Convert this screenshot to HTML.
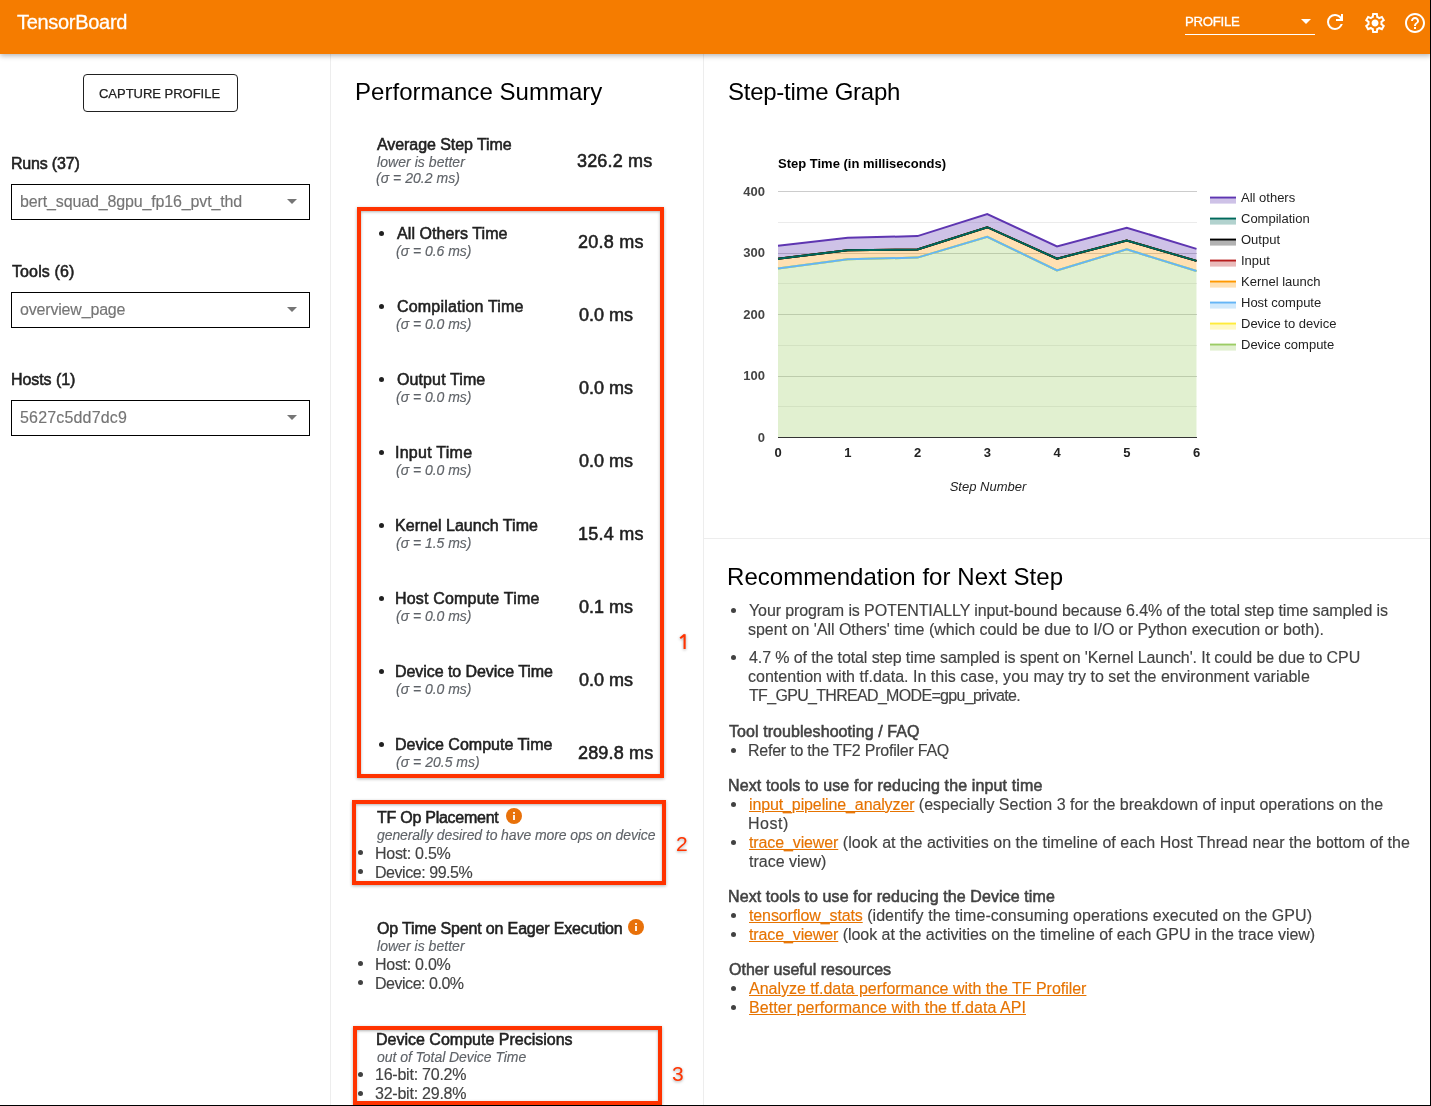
<!DOCTYPE html>
<html><head><meta charset="utf-8"><title>TensorBoard</title>
<style>
html,body{margin:0;padding:0;width:1431px;height:1106px;overflow:hidden;background:#fff;font-family:"Liberation Sans", sans-serif;}
.t{position:absolute;white-space:nowrap;line-height:1;will-change:transform;}
.r{position:absolute;box-sizing:content-box;}
</style></head><body>
<div class="r" style="left:0px;top:0px;width:1431px;height:54px;background:#f57c00;box-shadow:0 2px 5px rgba(0,0,0,.28);z-index:2"></div>
<div class="t" id="e7ac23f2f" style="left:16.90px;top:12.27px;font-size:20px;color:#fff;letter-spacing:-0.3px;z-index:3;-webkit-text-stroke:0.3px currentColor;">TensorBoard</div>
<div class="t" id="e34d6bd6a" style="left:1184.91px;top:14.83px;font-size:13.2px;color:#fff;letter-spacing:-0.28px;z-index:3;-webkit-text-stroke:0.3px currentColor;">PROFILE</div>
<div class="r" style="left:1185px;top:34px;width:130px;height:1px;background:#fff;z-index:3"></div>
<svg class="r" style="left:1301px;top:19px;z-index:3" width="10" height="5"><path d="M0 0H10L5 5Z" fill="#fff"/></svg>
<svg class="r" style="left:1323px;top:10px;z-index:3" width="24" height="24" viewBox="0 -960 960 960"><path fill="#fff" d="M480-160q-134 0-227-93t-93-227q0-134 93-227t227-93q69 0 132 28.5T720-690v-110h80v280H520v-80h168q-32-56-87.5-88T480-720q-100 0-170 70t-70 170q0 100 70 170t170 70q77 0 139-44t87-116h84q-28 106-114 173t-196 67Z"/></svg>
<svg class="r" style="left:1363px;top:11px;z-index:3" width="24" height="24" viewBox="0 -960 960 960"><path fill="#fff" d="M370-80l-16-128q-13-5-24.5-12T307-235l-119 50L78-375l103-78q-1-7-1-13.5v-27q0-6.5 1-13.5L78-585l110-190 119 50q11-8 23-15t24-12l16-128h220l16 128q13 5 24.5 12t22.5 15l119-50 110 190-103 78q1 7 1 13.5v27q0 6.5-2 13.5l103 78-110 190-118-50q-11 8-23 15t-24 12L590-80H370Zm70-80h79l14-106q31-8 57.5-23.5T639-327l99 41 39-68-86-65q5-14 7-29.5t2-31.5q0-16-2-31.5t-7-29.5l86-65-39-68-99 42q-22-23-48.5-38.5T533-694l-13-106h-79l-14 106q-31 8-57.5 23.5T321-633l-99-41-39 68 86 64q-5 15-7 30t-2 32q0 16 2 31t7 30l-86 65 39 68 99-42q22 23 48.5 38.5T427-266l13 106Zm42-180q58 0 99-41t41-99q0-58-41-99t-99-41q-59 0-99.5 41T342-480q0 58 40.5 99t99.5 41Zm-2-140Z"/></svg>
<svg class="r" style="left:1403px;top:11px;z-index:3" width="24" height="24" viewBox="0 0 24 24"><path fill="#fff" d="M11 18h2v-2h-2v2zm1-16C6.48 2 2 6.48 2 12s4.48 10 10 10 10-4.48 10-10S17.52 2 12 2zm0 18c-4.41 0-8-3.59-8-8s3.59-8 8-8 8 3.59 8 8-3.59 8-8 8zm0-14c-2.21 0-4 1.79-4 4h2c0-1.1.9-2 2-2s2 .9 2 2c0 2-3 1.75-3 5h2c0-2.25 3-2.5 3-5 0-2.21-1.79-4-4-4z"/></svg>
<div class="r" style="left:330px;top:54px;width:1px;height:1052px;background:#ededed"></div>
<div class="r" style="left:703px;top:54px;width:1px;height:1052px;background:#ededed"></div>
<div class="r" style="left:704px;top:538px;width:726px;height:1px;background:#ededed"></div>
<div class="r" style="left:1430px;top:0px;width:1px;height:1106px;background:#000;z-index:5"></div>
<div class="r" style="left:0px;top:1105px;width:1431px;height:1px;background:#000;z-index:5"></div>
<div class="r" style="left:83px;top:74px;width:153px;height:36px;border:1px solid #212121;border-radius:4px"></div>
<div class="t" id="e3f71703e" style="left:99.28px;top:86.70px;font-size:13px;color:#212121;letter-spacing:-0.022px;-webkit-text-stroke:0.25px currentColor;">CAPTURE PROFILE</div>
<div class="t" id="e69a73742" style="left:10.60px;top:156.46px;font-size:16px;color:#212121;letter-spacing:-0.188px;-webkit-text-stroke:0.55px currentColor;">Runs (37)</div>
<div class="r" style="left:11px;top:184px;width:297px;height:34px;border:1px solid #000"></div>
<div class="t" id="efdc58bc0" style="left:19.78px;top:194.46px;font-size:16px;color:#757575;letter-spacing:-0.138px;-webkit-text-stroke:0.15px currentColor;">bert_squad_8gpu_fp16_pvt_thd</div>
<svg class="r" style="left:287px;top:199px" width="10" height="5"><path d="M0 0H10L5 5Z" fill="#757575"/></svg>
<div class="t" id="e2957bea9" style="left:12.04px;top:264.46px;font-size:16px;color:#212121;letter-spacing:0.111px;-webkit-text-stroke:0.55px currentColor;">Tools (6)</div>
<div class="r" style="left:11px;top:292px;width:297px;height:34px;border:1px solid #000"></div>
<div class="t" id="ed848ae1f" style="left:19.78px;top:302.46px;font-size:16px;color:#757575;letter-spacing:-0.178px;-webkit-text-stroke:0.15px currentColor;">overview_page</div>
<svg class="r" style="left:287px;top:307px" width="10" height="5"><path d="M0 0H10L5 5Z" fill="#757575"/></svg>
<div class="t" id="e276de8dc" style="left:11.14px;top:372.46px;font-size:16px;color:#212121;letter-spacing:-0.075px;-webkit-text-stroke:0.55px currentColor;">Hosts (1)</div>
<div class="r" style="left:11px;top:400px;width:297px;height:34px;border:1px solid #000"></div>
<div class="t" id="ea2d31f17" style="left:19.78px;top:410.46px;font-size:16px;color:#757575;letter-spacing:0.174px;-webkit-text-stroke:0.15px currentColor;">5627c5dd7dc9</div>
<svg class="r" style="left:287px;top:415px" width="10" height="5"><path d="M0 0H10L5 5Z" fill="#757575"/></svg>
<div class="t" id="ec11216be" style="left:354.69px;top:80.28px;font-size:24px;color:#000;letter-spacing:0.035px;">Performance Summary</div>
<div class="t" id="e68c13739" style="left:376.72px;top:136.66px;font-size:16px;color:#212121;letter-spacing:-0.069px;-webkit-text-stroke:0.55px currentColor;">Average Step Time</div>
<div class="t" id="ef801746d" style="left:376.50px;top:154.95px;font-size:14px;color:#5f6368;font-style:italic;letter-spacing:0.051px;-webkit-text-stroke:0.15px currentColor;">lower is better</div>
<div class="t" id="e3f0840fb" style="left:375.60px;top:170.65px;font-size:14px;color:#5f6368;font-style:italic;letter-spacing:0.026px;-webkit-text-stroke:0.15px currentColor;">(&sigma; = 20.2 ms)</div>
<div class="t" id="effa8100f" style="left:577.05px;top:151.96px;font-size:18px;color:#212121;letter-spacing:0.17px;-webkit-text-stroke:0.55px currentColor;">326.2 ms</div>
<div class="r" style="left:379px;top:231px;width:5px;height:5px;background:#212121;border-radius:50%"></div>
<div class="t" id="e4fb858f4" style="left:396.85px;top:225.86px;font-size:16px;color:#212121;letter-spacing:0.079px;-webkit-text-stroke:0.55px currentColor;">All Others Time</div>
<div class="t" id="ebd3819c3" style="left:395.96px;top:244.15px;font-size:14px;color:#5f6368;font-style:italic;letter-spacing:-0.025px;-webkit-text-stroke:0.15px currentColor;">(&sigma; = 0.6 ms)</div>
<div class="t" id="e31d540ce" style="left:577.68px;top:232.96px;font-size:18px;color:#212121;letter-spacing:0.245px;-webkit-text-stroke:0.55px currentColor;">20.8 ms</div>
<div class="r" style="left:379px;top:304px;width:5px;height:5px;background:#212121;border-radius:50%"></div>
<div class="t" id="e8757c39d" style="left:396.85px;top:298.86px;font-size:16px;color:#212121;letter-spacing:0.192px;-webkit-text-stroke:0.55px currentColor;">Compilation Time</div>
<div class="t" id="e2998488b" style="left:395.96px;top:317.15px;font-size:14px;color:#5f6368;font-style:italic;letter-spacing:-0.025px;-webkit-text-stroke:0.15px currentColor;">(&sigma; = 0.0 ms)</div>
<div class="t" id="ed42637f7" style="left:578.58px;top:305.96px;font-size:18px;color:#212121;letter-spacing:-0.004px;-webkit-text-stroke:0.55px currentColor;">0.0 ms</div>
<div class="r" style="left:379px;top:377px;width:5px;height:5px;background:#212121;border-radius:50%"></div>
<div class="t" id="e3b615713" style="left:396.85px;top:371.86px;font-size:16px;color:#212121;letter-spacing:0.108px;-webkit-text-stroke:0.55px currentColor;">Output Time</div>
<div class="t" id="e2c4313df" style="left:395.96px;top:390.15px;font-size:14px;color:#5f6368;font-style:italic;letter-spacing:-0.025px;-webkit-text-stroke:0.15px currentColor;">(&sigma; = 0.0 ms)</div>
<div class="t" id="e11951815" style="left:578.58px;top:378.96px;font-size:18px;color:#212121;letter-spacing:-0.004px;-webkit-text-stroke:0.55px currentColor;">0.0 ms</div>
<div class="r" style="left:379px;top:450px;width:5px;height:5px;background:#212121;border-radius:50%"></div>
<div class="t" id="ec2a1ae87" style="left:395.05px;top:444.86px;font-size:16px;color:#212121;letter-spacing:0.26px;-webkit-text-stroke:0.55px currentColor;">Input Time</div>
<div class="t" id="e92be7d29" style="left:395.96px;top:463.15px;font-size:14px;color:#5f6368;font-style:italic;letter-spacing:-0.025px;-webkit-text-stroke:0.15px currentColor;">(&sigma; = 0.0 ms)</div>
<div class="t" id="eb084929b" style="left:578.58px;top:451.96px;font-size:18px;color:#212121;letter-spacing:-0.004px;-webkit-text-stroke:0.55px currentColor;">0.0 ms</div>
<div class="r" style="left:379px;top:523px;width:5px;height:5px;background:#212121;border-radius:50%"></div>
<div class="t" id="e550816f2" style="left:395.05px;top:517.86px;font-size:16px;color:#212121;letter-spacing:0.036px;-webkit-text-stroke:0.55px currentColor;">Kernel Launch Time</div>
<div class="t" id="ec676dd66" style="left:395.96px;top:536.15px;font-size:14px;color:#5f6368;font-style:italic;letter-spacing:-0.025px;-webkit-text-stroke:0.15px currentColor;">(&sigma; = 1.5 ms)</div>
<div class="t" id="eeed91f0b" style="left:577.68px;top:524.96px;font-size:18px;color:#212121;letter-spacing:0.245px;-webkit-text-stroke:0.55px currentColor;">15.4 ms</div>
<div class="r" style="left:379px;top:596px;width:5px;height:5px;background:#212121;border-radius:50%"></div>
<div class="t" id="e9079b867" style="left:395.05px;top:590.86px;font-size:16px;color:#212121;letter-spacing:0.182px;-webkit-text-stroke:0.55px currentColor;">Host Compute Time</div>
<div class="t" id="ecef85109" style="left:395.96px;top:609.15px;font-size:14px;color:#5f6368;font-style:italic;letter-spacing:-0.025px;-webkit-text-stroke:0.15px currentColor;">(&sigma; = 0.0 ms)</div>
<div class="t" id="e1f83909a" style="left:578.58px;top:597.96px;font-size:18px;color:#212121;letter-spacing:-0.004px;-webkit-text-stroke:0.55px currentColor;">0.1 ms</div>
<div class="r" style="left:379px;top:669px;width:5px;height:5px;background:#212121;border-radius:50%"></div>
<div class="t" id="e9eccda0c" style="left:395.05px;top:663.86px;font-size:16px;color:#212121;letter-spacing:-0.063px;-webkit-text-stroke:0.55px currentColor;">Device to Device Time</div>
<div class="t" id="eabe1e7b6" style="left:395.96px;top:682.15px;font-size:14px;color:#5f6368;font-style:italic;letter-spacing:-0.025px;-webkit-text-stroke:0.15px currentColor;">(&sigma; = 0.0 ms)</div>
<div class="t" id="e15b24e4e" style="left:578.58px;top:670.96px;font-size:18px;color:#212121;letter-spacing:-0.004px;-webkit-text-stroke:0.55px currentColor;">0.0 ms</div>
<div class="r" style="left:379px;top:742px;width:5px;height:5px;background:#212121;border-radius:50%"></div>
<div class="t" id="e86278ba4" style="left:395.05px;top:736.86px;font-size:16px;color:#212121;-webkit-text-stroke:0.55px currentColor;">Device Compute Time</div>
<div class="t" id="e9be4e9dd" style="left:395.96px;top:755.15px;font-size:14px;color:#5f6368;font-style:italic;letter-spacing:0.015px;-webkit-text-stroke:0.15px currentColor;">(&sigma; = 20.5 ms)</div>
<div class="t" id="e6b722b1d" style="left:577.68px;top:743.96px;font-size:18px;color:#212121;letter-spacing:0.169px;-webkit-text-stroke:0.55px currentColor;">289.8 ms</div>
<div class="t" id="ee5c8a053" style="left:376.50px;top:810.26px;font-size:16px;color:#212121;letter-spacing:-0.256px;-webkit-text-stroke:0.55px currentColor;">TF Op Placement</div>
<svg class="r" style="left:505.5px;top:808px" width="16" height="16" viewBox="0 0 16 16"><circle cx="8" cy="8" r="8" fill="#e8710a"/><rect x="7.1" y="7" width="1.8" height="5" fill="#fff"/><rect x="7.1" y="4" width="1.8" height="1.8" fill="#fff"/></svg>
<div class="t" id="ece835208" style="left:376.50px;top:828.15px;font-size:14px;color:#5f6368;font-style:italic;letter-spacing:-0.093px;-webkit-text-stroke:0.15px currentColor;">generally desired to have more ops on device</div>
<div class="r" style="left:358px;top:850.4px;width:5px;height:5px;background:#424242;border-radius:50%"></div>
<div class="t" id="ef08f3de1" style="left:374.64px;top:845.86px;font-size:16px;color:#424242;letter-spacing:-0.28px;-webkit-text-stroke:0.15px currentColor;">Host: 0.5%</div>
<div class="r" style="left:358px;top:869.4px;width:5px;height:5px;background:#424242;border-radius:50%"></div>
<div class="t" id="e7ad92dc4" style="left:374.64px;top:864.86px;font-size:16px;color:#424242;letter-spacing:-0.449px;-webkit-text-stroke:0.15px currentColor;">Device: 99.5%</div>
<div class="t" id="e0d9e2ee1" style="left:376.50px;top:920.96px;font-size:16px;color:#212121;letter-spacing:-0.164px;-webkit-text-stroke:0.55px currentColor;">Op Time Spent on Eager Execution</div>
<svg class="r" style="left:628.4px;top:919.3px" width="16" height="16" viewBox="0 0 16 16"><circle cx="8" cy="8" r="8" fill="#e8710a"/><rect x="7.1" y="7" width="1.8" height="5" fill="#fff"/><rect x="7.1" y="4" width="1.8" height="1.8" fill="#fff"/></svg>
<div class="t" id="e59f1dc70" style="left:376.50px;top:938.85px;font-size:14px;color:#5f6368;font-style:italic;letter-spacing:0.031px;-webkit-text-stroke:0.15px currentColor;">lower is better</div>
<div class="r" style="left:358px;top:961.1px;width:5px;height:5px;background:#424242;border-radius:50%"></div>
<div class="t" id="e9714f1e7" style="left:374.64px;top:956.56px;font-size:16px;color:#424242;letter-spacing:-0.28px;-webkit-text-stroke:0.15px currentColor;">Host: 0.0%</div>
<div class="r" style="left:358px;top:980.1px;width:5px;height:5px;background:#424242;border-radius:50%"></div>
<div class="t" id="e06a5ac77" style="left:374.64px;top:975.56px;font-size:16px;color:#424242;letter-spacing:-0.471px;-webkit-text-stroke:0.15px currentColor;">Device: 0.0%</div>
<div class="t" id="e09f7e4c1" style="left:375.60px;top:1031.66px;font-size:16px;color:#212121;letter-spacing:0.001px;-webkit-text-stroke:0.55px currentColor;">Device Compute Precisions</div>
<div class="t" id="eedd664b2" style="left:376.50px;top:1049.55px;font-size:14px;color:#5f6368;font-style:italic;letter-spacing:-0.047px;-webkit-text-stroke:0.15px currentColor;">out of Total Device Time</div>
<div class="r" style="left:358px;top:1071.8px;width:5px;height:5px;background:#424242;border-radius:50%"></div>
<div class="t" id="e4bf2a65a" style="left:374.64px;top:1067.26px;font-size:16px;color:#424242;letter-spacing:-0.231px;-webkit-text-stroke:0.15px currentColor;">16-bit: 70.2%</div>
<div class="r" style="left:358px;top:1090.8px;width:5px;height:5px;background:#424242;border-radius:50%"></div>
<div class="t" id="e03c9ac84" style="left:374.64px;top:1086.26px;font-size:16px;color:#424242;letter-spacing:-0.231px;-webkit-text-stroke:0.15px currentColor;">32-bit: 29.8%</div>
<div class="r" style="left:357px;top:207px;width:299px;height:563px;border:4px solid #ff3300;box-shadow:0 1px 3px rgba(0,0,0,.3), inset 0 1px 3px rgba(0,0,0,.3);z-index:4"></div>
<div class="r" style="left:352px;top:800px;width:306px;height:77px;border:4px solid #ff3300;box-shadow:0 1px 3px rgba(0,0,0,.3), inset 0 1px 3px rgba(0,0,0,.3);z-index:4"></div>
<div class="r" style="left:353px;top:1026px;width:301px;height:71px;border:4px solid #ff3300;box-shadow:0 1px 3px rgba(0,0,0,.3), inset 0 1px 3px rgba(0,0,0,.3);z-index:4"></div>
<svg class="r" style="left:670px;top:625px;z-index:4;filter:drop-shadow(0 1px 1.5px rgba(0,0,0,.35))" width="30" height="35"><path d="M14.6 9.3V24 M14.8 9.6L10.2 13.3" stroke="#ff3300" stroke-width="2.1" fill="none"/></svg>
<div class="t" style="left:675.50px;top:833.22px;font-size:21px;color:#ff3300;z-index:4;text-shadow:0 1px 3px rgba(0,0,0,.35);">2</div>
<div class="t" style="left:671.50px;top:1063.22px;font-size:21px;color:#ff3300;z-index:4;text-shadow:0 1px 3px rgba(0,0,0,.35);">3</div>
<div class="t" id="e5ab8f3c4" style="left:728.23px;top:80.28px;font-size:24px;color:#000;letter-spacing:-0.267px;">Step-time Graph</div>
<div class="t" id="eebe5de23" style="left:727.38px;top:565.28px;font-size:24px;color:#000;letter-spacing:0.043px;">Recommendation for Next Step</div>
<div class="r" style="left:730.9px;top:607.5px;width:5px;height:5px;background:#424242;border-radius:50%"></div>
<div class="t" id="e133f73ef" style="left:749.04px;top:602.66px;font-size:16px;color:#424242;letter-spacing:-0.106px;-webkit-text-stroke:0.15px currentColor;">Your program is POTENTIALLY input-bound because 6.4% of the total step time sampled is</div>
<div class="t" id="e5d973fcd" style="left:748.14px;top:621.56px;font-size:16px;color:#424242;letter-spacing:-0.014px;-webkit-text-stroke:0.15px currentColor;">spent on 'All Others' time (which could be due to I/O or Python execution or both).</div>
<div class="r" style="left:730.9px;top:655.3px;width:5px;height:5px;background:#424242;border-radius:50%"></div>
<div class="t" id="e650623d0" style="left:749.04px;top:650.46px;font-size:16px;color:#424242;letter-spacing:-0.099px;-webkit-text-stroke:0.15px currentColor;">4.7 % of the total step time sampled is spent on 'Kernel Launch'. It could be due to CPU</div>
<div class="t" id="ea1539573" style="left:748.14px;top:669.36px;font-size:16px;color:#424242;letter-spacing:0.019px;-webkit-text-stroke:0.15px currentColor;">contention with tf.data. In this case, you may try to set the environment variable</div>
<div class="t" id="ef682a00d" style="left:749.04px;top:688.16px;font-size:16px;color:#424242;letter-spacing:-0.684px;-webkit-text-stroke:0.15px currentColor;">TF_GPU_THREAD_MODE=gpu_private.</div>
<div class="t" id="e60ab8e96" style="left:729.04px;top:724.26px;font-size:16px;color:#424242;letter-spacing:0.072px;-webkit-text-stroke:0.55px currentColor;">Tool troubleshooting / FAQ</div>
<div class="r" style="left:730.9px;top:748.1px;width:5px;height:5px;background:#424242;border-radius:50%"></div>
<div class="t" id="e4ce9f325" style="left:748.14px;top:743.26px;font-size:16px;color:#424242;letter-spacing:-0.231px;-webkit-text-stroke:0.15px currentColor;">Refer to the TF2 Profiler FAQ</div>
<div class="t" id="e828c1206" style="left:728.14px;top:778.16px;font-size:16px;color:#424242;letter-spacing:0.131px;-webkit-text-stroke:0.55px currentColor;">Next tools to use for reducing the input time</div>
<div class="r" style="left:730.9px;top:802px;width:5px;height:5px;background:#424242;border-radius:50%"></div>
<div class="t" id="ed7932b9d" style="left:748.50px;top:797.16px;font-size:16px;color:#424242;-webkit-text-stroke:0.15px currentColor;"><span style="color:#e67300;text-decoration:underline;letter-spacing:-0.12px">input_pipeline_analyzer</span> (especially Section 3 for the breakdown of input operations on the</div>
<div class="t" id="ea72104e3" style="left:748.14px;top:816.16px;font-size:16px;color:#424242;letter-spacing:0.54px;-webkit-text-stroke:0.15px currentColor;">Host)</div>
<div class="r" style="left:730.9px;top:840px;width:5px;height:5px;background:#424242;border-radius:50%"></div>
<div class="t" id="e32a4a462" style="left:748.50px;top:835.16px;font-size:16px;color:#424242;letter-spacing:0.044px;-webkit-text-stroke:0.15px currentColor;"><span style="color:#e67300;text-decoration:underline;letter-spacing:-0.12px">trace_viewer</span> (look at the activities on the timeline of each Host Thread near the bottom of the</div>
<div class="t" id="e4cf5d722" style="left:749.04px;top:854.16px;font-size:16px;color:#424242;letter-spacing:-0.009px;-webkit-text-stroke:0.15px currentColor;">trace view)</div>
<div class="t" id="e510fa0e5" style="left:728.14px;top:889.16px;font-size:16px;color:#424242;letter-spacing:0.088px;-webkit-text-stroke:0.55px currentColor;">Next tools to use for reducing the Device time</div>
<div class="r" style="left:730.9px;top:913px;width:5px;height:5px;background:#424242;border-radius:50%"></div>
<div class="t" id="ee2837a58" style="left:748.50px;top:908.16px;font-size:16px;color:#424242;letter-spacing:0.047px;-webkit-text-stroke:0.15px currentColor;"><span style="color:#e67300;text-decoration:underline;letter-spacing:-0.12px">tensorflow_stats</span> (identify the time-consuming operations executed on the GPU)</div>
<div class="r" style="left:730.9px;top:932px;width:5px;height:5px;background:#424242;border-radius:50%"></div>
<div class="t" id="ee41f4efe" style="left:748.50px;top:927.16px;font-size:16px;color:#424242;letter-spacing:-0.035px;-webkit-text-stroke:0.15px currentColor;"><span style="color:#e67300;text-decoration:underline;letter-spacing:-0.12px">trace_viewer</span> (look at the activities on the timeline of each GPU in the trace view)</div>
<div class="t" id="ef0979efa" style="left:729.04px;top:961.96px;font-size:16px;color:#424242;letter-spacing:0.013px;-webkit-text-stroke:0.55px currentColor;">Other useful resources</div>
<div class="r" style="left:730.9px;top:985.8px;width:5px;height:5px;background:#424242;border-radius:50%"></div>
<div class="t" id="eebb6f89c" style="left:749.04px;top:980.96px;font-size:16px;color:#424242;letter-spacing:-0.023px;-webkit-text-stroke:0.15px currentColor;"><span style="color:#e67300;text-decoration:underline">Analyze tf.data performance with the TF Profiler</span></div>
<div class="r" style="left:730.9px;top:1004.8px;width:5px;height:5px;background:#424242;border-radius:50%"></div>
<div class="t" id="e8cb9e337" style="left:749.04px;top:999.96px;font-size:16px;color:#424242;letter-spacing:0.056px;-webkit-text-stroke:0.15px currentColor;"><span style="color:#e67300;text-decoration:underline">Better performance with the tf.data API</span></div>
<svg class="r" style="left:0;top:0;will-change:transform" width="1431" height="1106"><rect x="778" y="191" width="419" height="1" fill="#cccccc"/><rect x="778" y="222" width="419" height="1" fill="#ebebeb"/><rect x="778" y="253" width="419" height="1" fill="#cccccc"/><rect x="778" y="283" width="419" height="1" fill="#ebebeb"/><rect x="778" y="314" width="419" height="1" fill="#cccccc"/><rect x="778" y="345" width="419" height="1" fill="#ebebeb"/><rect x="778" y="376" width="419" height="1" fill="#cccccc"/><rect x="778" y="406" width="419" height="1" fill="#ebebeb"/><path d="M778.00 268.40 L847.75 259.30 L917.50 257.60 L987.25 236.90 L1057.00 270.40 L1126.75 249.40 L1196.50 271.00 L1196.50 437.50 L1126.75 437.50 L1057.00 437.50 L987.25 437.50 L917.50 437.50 L847.75 437.50 L778.00 437.50Z" fill="#9ccc65" fill-opacity="0.3"/><path d="M778.00 258.70 L847.75 250.30 L917.50 249.50 L987.25 227.20 L1057.00 258.70 L1126.75 240.50 L1196.50 260.90 L1196.50 271.00 L1126.75 249.40 L1057.00 270.40 L987.25 236.90 L917.50 257.60 L847.75 259.30 L778.00 268.40Z" fill="#ff9800" fill-opacity="0.3"/><path d="M778.00 245.80 L847.75 237.80 L917.50 236.10 L987.25 214.00 L1057.00 246.40 L1126.75 227.70 L1196.50 248.90 L1196.50 260.90 L1126.75 240.50 L1057.00 258.70 L987.25 227.20 L917.50 249.50 L847.75 250.30 L778.00 258.70Z" fill="#5e35b1" fill-opacity="0.3"/><path d="M778.00 268.40 L847.75 259.30 L917.50 257.60 L987.25 236.90 L1057.00 270.40 L1126.75 249.40 L1196.50 271.00" fill="none" stroke="#9ccc65" stroke-width="2"/><path d="M778.00 268.40 L847.75 259.30 L917.50 257.60 L987.25 236.90 L1057.00 270.40 L1126.75 249.40 L1196.50 271.00" fill="none" stroke="#ffeb3b" stroke-width="2"/><path d="M778.00 268.40 L847.75 259.30 L917.50 257.60 L987.25 236.90 L1057.00 270.40 L1126.75 249.40 L1196.50 271.00" fill="none" stroke="#64b5f6" stroke-width="2"/><path d="M778.00 258.70 L847.75 250.30 L917.50 249.50 L987.25 227.20 L1057.00 258.70 L1126.75 240.50 L1196.50 260.90" fill="none" stroke="#ff9800" stroke-width="2"/><path d="M778.00 258.70 L847.75 250.30 L917.50 249.50 L987.25 227.20 L1057.00 258.70 L1126.75 240.50 L1196.50 260.90" fill="none" stroke="#b71c1c" stroke-width="2"/><path d="M778.00 258.70 L847.75 250.30 L917.50 249.50 L987.25 227.20 L1057.00 258.70 L1126.75 240.50 L1196.50 260.90" fill="none" stroke="#000" stroke-width="2"/><path d="M778.00 258.70 L847.75 250.30 L917.50 249.50 L987.25 227.20 L1057.00 258.70 L1126.75 240.50 L1196.50 260.90" fill="none" stroke="#00695c" stroke-width="2"/><path d="M778.00 245.80 L847.75 237.80 L917.50 236.10 L987.25 214.00 L1057.00 246.40 L1126.75 227.70 L1196.50 248.90" fill="none" stroke="#5e35b1" stroke-width="2"/><rect x="778" y="437" width="419" height="1" fill="#333"/><text x="778" y="167.8" style="font-family:&quot;Liberation Sans&quot;,sans-serif;font-size:13px;font-weight:bold" fill="#000">Step Time (in milliseconds)</text><text x="765" y="195.6" text-anchor="end" style="font-family:&quot;Liberation Sans&quot;,sans-serif;font-size:13px;font-weight:bold" fill="#444">400</text><text x="765" y="257.1" text-anchor="end" style="font-family:&quot;Liberation Sans&quot;,sans-serif;font-size:13px;font-weight:bold" fill="#444">300</text><text x="765" y="318.6" text-anchor="end" style="font-family:&quot;Liberation Sans&quot;,sans-serif;font-size:13px;font-weight:bold" fill="#444">200</text><text x="765" y="380.1" text-anchor="end" style="font-family:&quot;Liberation Sans&quot;,sans-serif;font-size:13px;font-weight:bold" fill="#444">100</text><text x="765" y="441.6" text-anchor="end" style="font-family:&quot;Liberation Sans&quot;,sans-serif;font-size:13px;font-weight:bold" fill="#444">0</text><text x="778.00" y="456.8" text-anchor="middle" style="font-family:&quot;Liberation Sans&quot;,sans-serif;font-size:13px;font-weight:bold" fill="#222">0</text><text x="847.75" y="456.8" text-anchor="middle" style="font-family:&quot;Liberation Sans&quot;,sans-serif;font-size:13px;font-weight:bold" fill="#222">1</text><text x="917.50" y="456.8" text-anchor="middle" style="font-family:&quot;Liberation Sans&quot;,sans-serif;font-size:13px;font-weight:bold" fill="#222">2</text><text x="987.25" y="456.8" text-anchor="middle" style="font-family:&quot;Liberation Sans&quot;,sans-serif;font-size:13px;font-weight:bold" fill="#222">3</text><text x="1057.00" y="456.8" text-anchor="middle" style="font-family:&quot;Liberation Sans&quot;,sans-serif;font-size:13px;font-weight:bold" fill="#222">4</text><text x="1126.75" y="456.8" text-anchor="middle" style="font-family:&quot;Liberation Sans&quot;,sans-serif;font-size:13px;font-weight:bold" fill="#222">5</text><text x="1196.50" y="456.8" text-anchor="middle" style="font-family:&quot;Liberation Sans&quot;,sans-serif;font-size:13px;font-weight:bold" fill="#222">6</text><text x="988" y="490.7" text-anchor="middle" style="font-family:&quot;Liberation Sans&quot;,sans-serif;font-size:13px;font-style:italic" fill="#222">Step Number</text><rect x="1210" y="198.6" width="26" height="5" fill="#5e35b1" fill-opacity="0.3"/><rect x="1210" y="196.6" width="26" height="2" fill="#5e35b1"/><text x="1241" y="202" style="font-family:&quot;Liberation Sans&quot;,sans-serif;font-size:13px" fill="#222">All others</text><rect x="1210" y="219.6" width="26" height="5" fill="#00695c" fill-opacity="0.3"/><rect x="1210" y="217.6" width="26" height="2" fill="#00695c"/><text x="1241" y="223" style="font-family:&quot;Liberation Sans&quot;,sans-serif;font-size:13px" fill="#222">Compilation</text><rect x="1210" y="240.6" width="26" height="5" fill="#000" fill-opacity="0.3"/><rect x="1210" y="238.6" width="26" height="2" fill="#000"/><text x="1241" y="244" style="font-family:&quot;Liberation Sans&quot;,sans-serif;font-size:13px" fill="#222">Output</text><rect x="1210" y="261.6" width="26" height="5" fill="#b71c1c" fill-opacity="0.3"/><rect x="1210" y="259.6" width="26" height="2" fill="#b71c1c"/><text x="1241" y="265" style="font-family:&quot;Liberation Sans&quot;,sans-serif;font-size:13px" fill="#222">Input</text><rect x="1210" y="282.6" width="26" height="5" fill="#ff9800" fill-opacity="0.3"/><rect x="1210" y="280.6" width="26" height="2" fill="#ff9800"/><text x="1241" y="286" style="font-family:&quot;Liberation Sans&quot;,sans-serif;font-size:13px" fill="#222">Kernel launch</text><rect x="1210" y="303.6" width="26" height="5" fill="#64b5f6" fill-opacity="0.3"/><rect x="1210" y="301.6" width="26" height="2" fill="#64b5f6"/><text x="1241" y="307" style="font-family:&quot;Liberation Sans&quot;,sans-serif;font-size:13px" fill="#222">Host compute</text><rect x="1210" y="324.6" width="26" height="5" fill="#ffeb3b" fill-opacity="0.3"/><rect x="1210" y="322.6" width="26" height="2" fill="#ffeb3b"/><text x="1241" y="328" style="font-family:&quot;Liberation Sans&quot;,sans-serif;font-size:13px" fill="#222">Device to device</text><rect x="1210" y="345.6" width="26" height="5" fill="#9ccc65" fill-opacity="0.3"/><rect x="1210" y="343.6" width="26" height="2" fill="#9ccc65"/><text x="1241" y="349" style="font-family:&quot;Liberation Sans&quot;,sans-serif;font-size:13px" fill="#222">Device compute</text></svg>
</body></html>
